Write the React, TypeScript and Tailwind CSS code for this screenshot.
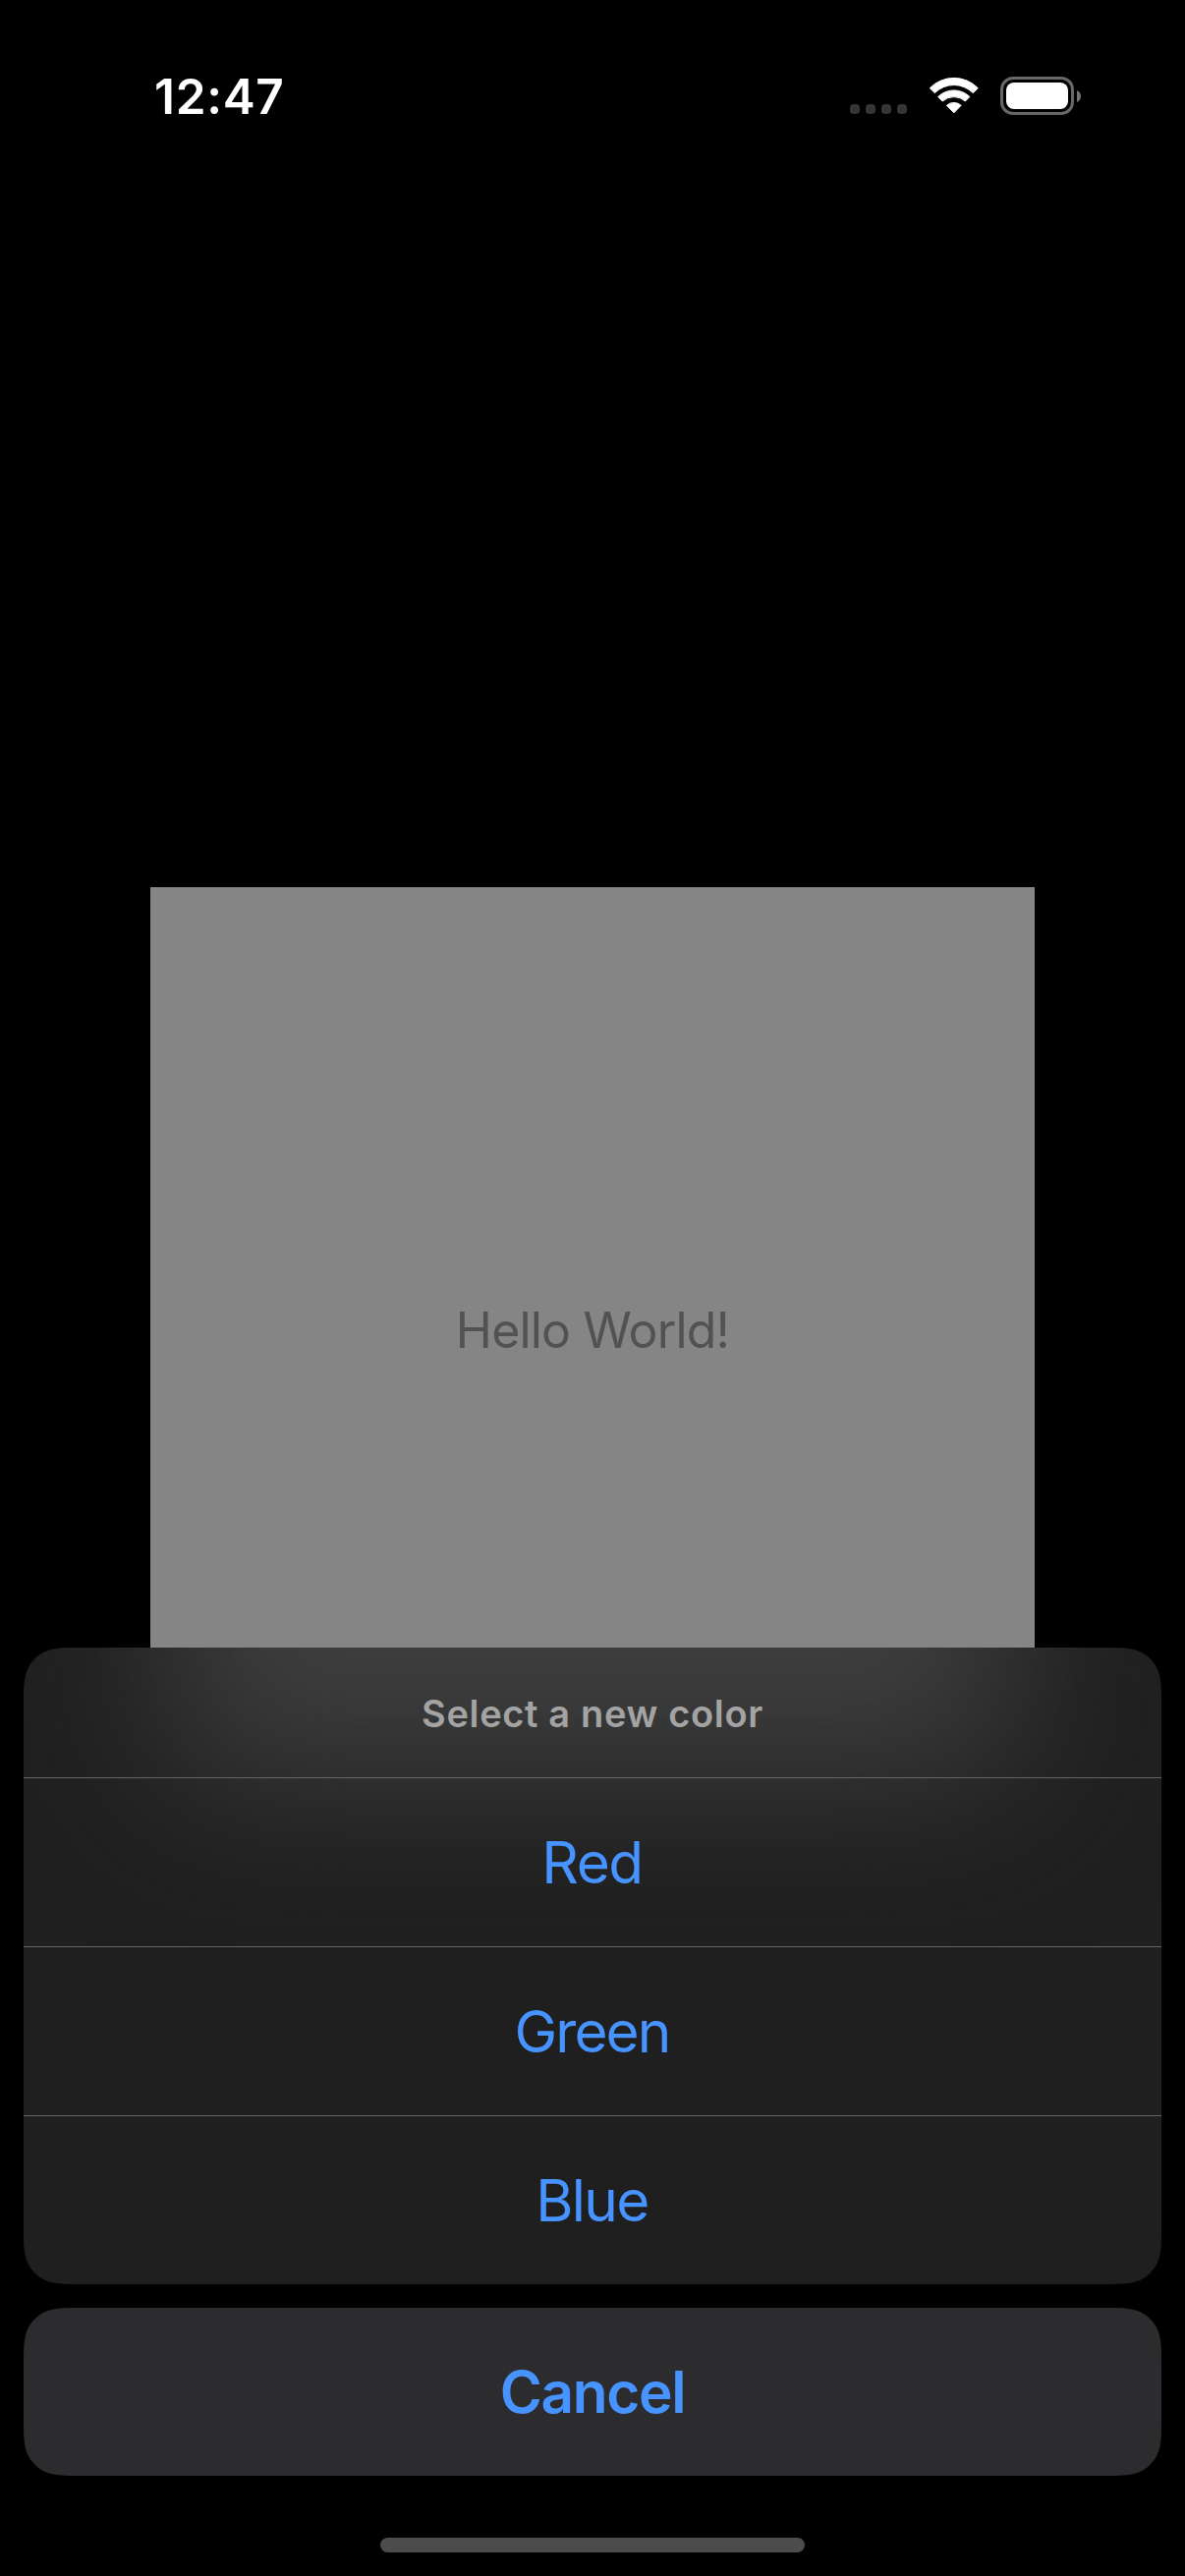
import type { ReactNode } from "react";

const SHEET_WIDTH = 1158;

/** Outline of a box with continuous-curvature corners. */
function smoothRect(w: number, h: number, r: number): string {
  const a = 1.52866 * r;
  const b = 1.08849 * r;
  const c = 0.86841 * r;
  const d = 0.63149 * r;
  const e = 0.07491 * r;
  const f = 0.37282 * r;
  const g = 0.16906 * r;
  return [
    `M${a} 0H${w - a}`,
    `C${w - b} 0 ${w - c} 0 ${w - d} ${e}C${w - f} ${g} ${w - g} ${f} ${w - e} ${d}C${w} ${c} ${w} ${b} ${w} ${a}`,
    `V${h - a}`,
    `C${w} ${h - b} ${w} ${h - c} ${w - e} ${h - d}C${w - g} ${h - f} ${w - f} ${h - g} ${w - d} ${h - e}C${w - c} ${h} ${w - b} ${h} ${w - a} ${h}`,
    `H${a}`,
    `C${b} ${h} ${c} ${h} ${d} ${h - e}C${f} ${h - g} ${g} ${h - f} ${e} ${h - d}C0 ${h - c} 0 ${h - b} 0 ${h - a}`,
    `V${a}`,
    `C0 ${b} 0 ${c} ${e} ${d}C${g} ${f} ${f} ${g} ${d} ${e}C${c} 0 ${b} 0 ${a} 0Z`,
  ].join("");
}

function Panel({ height, className, children }: { height: number; className: string; children: ReactNode }) {
  return (
    <div className={className} style={{ height, clipPath: `path("${smoothRect(SHEET_WIDTH, height, 39)}")` }}>
      {children}
    </div>
  );
}

function WifiIcon() {
  return (
    <svg className="block h-[38px] w-[52px]" viewBox="0 0 52 38" fill="#fff" stroke="#fff" strokeWidth="1" strokeLinejoin="round">
      <path d="M1.3 11.7A34.2 34.2 0 0 1 50.3 11.7L45.3 16.6A27.6 27.6 0 0 0 6.300 16.600Z" />
      <path d="M9.700 20.500A23 23 0 0 1 41.900 20.500L37.400 25A17.500 17.500 0 0 0 14.200 25Z" />
      <path d="M18.400 29.300A11 11 0 0 1 33.200 29.300L25.800 36.800Z" />
    </svg>
  );
}

function BatteryIcon() {
  return (
    <div className="flex items-center gap-[3px]">
      <div className="h-[39px] w-[75px] rounded-[13px] border-3 border-[#686868] p-[3px]">
        <div className="h-full w-full rounded-[8px] bg-white" />
      </div>
      <svg className="block h-3 w-1" viewBox="0 0 4 12" fill="#747474">
        <path d="M0 0C2.500 1 4 3.300 4 6S2.500 11 0 12Z" />
      </svg>
    </div>
  );
}

function StatusBar() {
  return (
    <header className="flex h-[177px] items-start justify-between pt-[78px] pr-[106px] pl-[157px]">
      <span className="mt-[-10px] text-[49.500px] leading-[60px] font-semibold tracking-[0.700px] text-white">12:47</span>
      <div className="flex items-start">
        <div className="mt-7 flex gap-1.5">
          {[0, 1, 2, 3].map((i) => (
            <span key={i} className="size-2.5 rounded-[4px] bg-[#363636]" />
          ))}
        </div>
        <div className="mr-[21px] ml-[22px] w-[52px]">
          <WifiIcon />
        </div>
        <BatteryIcon />
      </div>
    </header>
  );
}

const COLORS = [
  { label: "Red", tracking: "tracking-[-1.400px]" },
  { label: "Green", tracking: "tracking-[-1.900px]" },
  { label: "Blue", tracking: "tracking-[-1.600px]" },
];

function ActionSheet() {
  return (
    <div className="absolute inset-x-6 top-[1677px] flex flex-col gap-6">
      <Panel height={648} className="relative w-full overflow-hidden bg-[#1f1f1f]">
        {/* Diffuse glow of the square behind the translucent panel */}
        <div className="absolute top-[-474px] left-[149px] h-[604px] w-[860px] bg-[#3f3f3f] blur-[84px]" />
        <div className="relative flex h-full flex-col">
          <div className="flex h-[132px] items-center justify-center pt-0.5 text-[38px] leading-[48px] font-semibold tracking-[0.650px] text-[#a3a3a3]">
            Select a new color
          </div>
          {COLORS.map(({ label, tracking }) => (
            <button
              key={label}
              className={`h-[172px] w-full border-t border-[#636563] pr-px text-[58.500px] leading-[70px] text-[#4793ff] ${tracking}`}
            >
              {label}
            </button>
          ))}
        </div>
      </Panel>
      <Panel height={171} className="w-full bg-[#2c2c2e]">
        <button className="h-full w-full text-[58.500px] leading-[70px] font-semibold tracking-[-1.300px] text-[#4793ff]">Cancel</button>
      </Panel>
    </div>
  );
}

export default function App() {
  return (
    <div className="relative h-[2622px] w-[1206px] overflow-hidden bg-black font-['Inter',sans-serif]">
      <StatusBar />
      <main className="flex h-[2352px] items-center justify-center">
        <div className="flex size-[900px] items-center justify-center bg-[#858585] pt-0.5 text-[50px] leading-[61px] tracking-[-0.800px] text-[#525252]">
          Hello World!
        </div>
      </main>
      <ActionSheet />
      <div className="absolute top-[2583px] left-[387px] h-[15px] w-[432px] rounded-full bg-[#4c4c4c]" />
    </div>
  );
}
